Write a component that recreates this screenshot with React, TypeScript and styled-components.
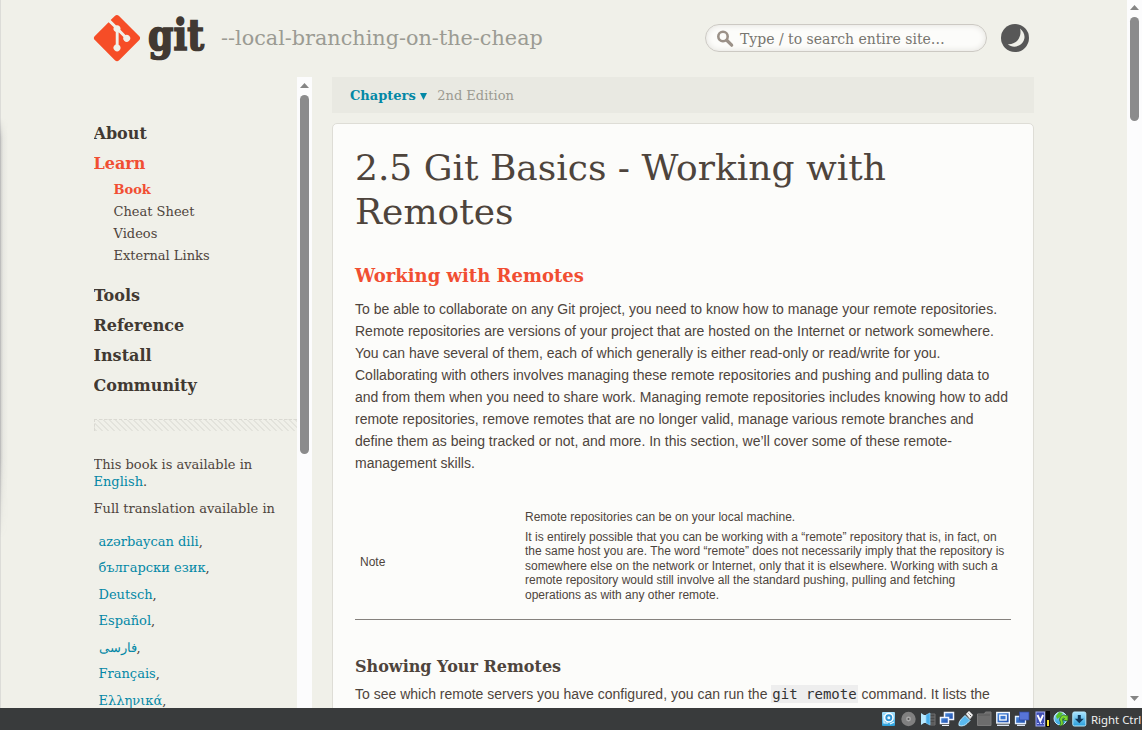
import React from "react";
import styled, { createGlobalStyle } from "styled-components";

const serif = '"DejaVu Serif", serif';
const sans = '"Liberation Sans", Arial, sans-serif';

const Global = createGlobalStyle`
  * { box-sizing: border-box; }
  body { margin: 0; overflow: hidden; background: #f0f0e9; color: #4e443c; font-family: ${serif}; }
  h1, h2, h3, p, ul { margin: 0; padding: 0; }
  a { color: #0388a6; text-decoration: none; }
`;

const Screen = styled.div`
  width: 1142px;
  height: 730px;
  display: flex;
  flex-direction: column;
  overflow: hidden;
`;
const Viewport = styled.div`
  height: 708px;
  display: flex;
  overflow: hidden;
`;
const Page = styled.div`
  position: relative;
  width: 1127px;
  height: 708px;
  padding: 0 93px 0 94px;
  background: #f0f0e9;
`;
const EdgeShadow = styled.div`
  position: absolute;
  left: 0;
  top: 0;
  width: 1px;
  height: 708px;
  background: #dcdcd8;
  &::after {
    content: "";
    position: absolute;
    left: 0;
    top: 118px;
    width: 8px;
    height: 420px;
    background: linear-gradient(90deg, rgba(90, 90, 100, 0.26), rgba(120, 120, 130, 0.07) 40%, transparent);
    mask-image: linear-gradient(transparent, #000 20px, #000 340px, transparent);
  }
`;

const Header = styled.header`
  height: 77px;
  display: flex;
  align-items: flex-start;
`;
const Logo = styled.svg`
  width: 112px;
  height: 52px;
  margin-top: 13px;
  flex: none;
  overflow: visible;
`;
const Tagline = styled.div`
  margin: 24px 0 0 15px;
  width: 484px;
  font-size: 20.75px;
  line-height: 28px;
  color: #9b9b93;
  white-space: nowrap;
`;
const Search = styled.div`
  width: 282px;
  height: 28px;
  margin-top: 24px;
  padding: 2px 0 0 10px;
  display: flex;
  align-items: center;
  border: 1px solid #ccc9c3;
  border-radius: 14px;
  background: #fcfcfa;
  box-shadow: inset 0 0 6px #e0dfda;
  font-size: 14px;
  color: #77756f;
  svg { width: 18px; height: 18px; margin-right: 6px; }
`;
const ThemeToggle = styled.svg`
  width: 28px;
  height: 28px;
  margin: 24px 0 0 14px;
`;

const Columns = styled.div`
  display: flex;
  height: 631px;
`;
const Sidebar = styled.aside`
  width: 203.5px;
  height: 631px;
  margin-left: -0.5px;
  padding-top: 42px;
  overflow: hidden;
`;
const NavItem = styled.div<{ $active?: boolean }>`
  height: 30px;
  line-height: 30px;
  font-size: 16px;
  font-weight: bold;
  color: ${(p) => (p.$active ? "#f14e32" : "#413932")};
`;
const SubNav = styled.div`
  padding: 0 0 14px 20px;
`;
const SubItem = styled.div<{ $active?: boolean }>`
  height: 22px;
  line-height: 22px;
  font-size: 13px;
  font-weight: ${(p) => (p.$active ? "bold" : "normal")};
  color: ${(p) => (p.$active ? "#f14e32" : "#4e443c")};
`;
const Hatch = styled.div`
  height: 12px;
  margin: 18px 0 25px 0;
  border-top: 1px dashed #dad9d2;
  border-left: 1px dashed #dad9d2;
  background: repeating-linear-gradient(45deg, #e3e3dc 0 2.1px, #f0f0e9 2.1px 4.243px);
`;
const SideText = styled.p`
  margin-bottom: 10px;
  font-size: 13px;
  line-height: 17px;
  white-space: nowrap;
`;
const Languages = styled.ul`
  list-style: none;
  padding: 1.8px 0 0 5px;
`;
const Language = styled.li`
  height: 26.5px;
  line-height: 26.5px;
  font-size: 13px;
`;

const Track = styled.div<{ $height: number }>`
  width: 15px;
  height: ${(p) => p.$height}px;
  flex: none;
  display: flex;
  flex-direction: column;
  align-items: center;
  background: #fcfcfd;
`;
const Thumb = styled.div<{ $height: number }>`
  width: 9px;
  height: ${(p) => p.$height}px;
  border-radius: 5px;
  background: #8b8b8c;
`;
const Arrow = styled.svg<{ $down?: boolean }>`
  width: 9px;
  height: 5px;
  margin: ${(p) => (p.$down ? "auto 0 7px" : "5px 0 7px")};
  transform: ${(p) => (p.$down ? "rotate(180deg)" : "none")};
`;
const SidebarTrack = styled(Track)`
  padding-top: 1px;
`;

const Main = styled.main`
  width: 702px;
  margin-left: 20px;
  flex: none;
`;
const BookBar = styled.div`
  height: 36px;
  padding-left: 18px;
  display: flex;
  align-items: center;
  gap: 10.5px;
  margin-bottom: 10px;
  background: #e9e9e2;
  font-size: 13px;
  color: #9b9a91;
`;
const Chapters = styled.a`
  display: flex;
  align-items: center;
  gap: 4px;
  font-weight: bold;
  svg { width: 7px; height: 7px; margin-top: 2px; }
`;
const Card = styled.article`
  height: 700px;
  padding: 22px 22px 0;
  background: #fcfcfa;
  border: 1px solid #deddd6;
  border-radius: 5px;
`;
const Title = styled.h1`
  font-size: 36px;
  font-weight: normal;
  line-height: 44px;
  color: #4e443c;
  margin-bottom: 29px;
  white-space: nowrap;
`;
const Heading = styled.h2`
  font-size: 18px;
  line-height: 26px;
  color: #f14e32;
  margin-bottom: 9px;
`;
const Body = styled.p`
  font-family: ${sans};
  font-size: 14px;
  line-height: 22px;
  white-space: nowrap;
`;
const Note = styled.div`
  display: grid;
  grid-template-columns: 165px 1fr;
  align-items: center;
  height: 115px;
  margin: 31px 0 36px;
  padding: 4px 0 15.2px 5px;
  font-family: ${sans};
  font-size: 12px;
  line-height: 14.5px;
  border-bottom: 1px solid #85817d;
  white-space: nowrap;
`;
const NoteLabel = styled.div`
  padding-top: 11.4px;
`;
const NoteLead = styled.p`
  margin-bottom: 5px;
`;
const SubHeading = styled.h3`
  font-size: 16px;
  line-height: 22px;
  margin-bottom: 5px;
`;
const Code = styled.code`
  padding: 1px 1px;
  font-family: "DejaVu Sans Mono", monospace;
  font-size: 14px;
  color: #333;
  background: #eee;
`;

const StatusBar = styled.footer`
  height: 22px;
  padding-left: 881px;
  display: flex;
  align-items: center;
  background: #393b3c;
  color: #f2f2f2;
  font: 11.4px "Noto Sans", sans-serif;
  white-space: nowrap;
  svg { width: 208px; height: 22px; flex: none; }
  span { margin-left: 2px; }
`;

const ScrollArrow = ({ down }: { down?: boolean }) => (
  <Arrow $down={down} viewBox="0 0 9 5"><path d="M0 5 4.5 0 9 5Z" fill="#858585" /></Arrow>
);

const languages = ["azərbaycan dili", "български език", "Deutsch", "Español", "فارسی", "Français", "Ελληνικά"];

const StatusIcons = () => (
  <svg viewBox="0 0 208 22">
    <defs>
      <linearGradient id="sky" x2="0" y2="1"><stop stopColor="#a9e3ff" /><stop offset="1" stopColor="#289fdb" /></linearGradient>
      <linearGradient id="royal" x2="1" y2="1"><stop stopColor="#4d90e0" /><stop offset="1" stopColor="#1c48a8" /></linearGradient>
    </defs>
    <rect x="1" y="4" width="13" height="14" rx="1" fill="url(#sky)" />
    <circle cx="7.8" cy="9.7" r="4.2" fill="#2e93d4" stroke="#fff" strokeWidth="1.5" />
    <circle cx="7.8" cy="9.7" r="1.5" fill="#e9f8ff" /><path d="M3 7v8h4M9 16l4-2" stroke="#e9f8ff" strokeWidth="1.2" fill="none" />
    <circle cx="27.5" cy="11" r="7.2" fill="#808080" /><circle cx="27.5" cy="11" r="2.4" fill="#aaa" /><circle cx="27.5" cy="11" r="1" fill="#555" />
    <path d="M49 6h5v11h-5M49 9h5M49 12h5M49 15h5" stroke="#707070" fill="#4a4a4a" />
    <path d="M40 5v12l3-2h2V7h-2Z" fill="#b8e9ff" /><path d="M45 7l4-2v12l-4-2Z" fill="#47aeea" stroke="#8fd3fa" strokeWidth=".7" />
    <rect x="63.5" y="4.5" width="9" height="7" fill="url(#royal)" stroke="#eef4ff" strokeWidth="1.5" />
    <rect x="59.5" y="9.5" width="8" height="6" fill="url(#royal)" stroke="#eef4ff" strokeWidth="1.5" /><path d="M61 17.5h7" stroke="#eef4ff" />
    <path d="M78 17.5c-.5-3 1-5 3-7l3-3 5 5-3 3c-2 2-5 3-8 2Z" fill="#5ab9ef" stroke="#c0eaff" /><path d="m85 6 3-3 4 4-3 4Z" fill="#f2f2f2" stroke="#aaa" strokeWidth=".6" /><path d="m87.5 5.5 1 1M89 7l1 1" stroke="#555" />
    <path d="M96.5 6h7l1-2h5.5v13.5H96.5Z" fill="#6d6d6d" stroke="#7b7b7b" /><path d="M97 7h12" stroke="#5b5b5b" />
    <rect x="115.8" y="4.5" width="12.5" height="10.5" fill="url(#royal)" stroke="#f4f9ff" strokeWidth="1.4" /><rect x="118.8" y="7.2" width="6.4" height="4.8" fill="#3d78d0" stroke="#fff" strokeWidth="1.3" /><path d="M116 17.3h12" stroke="#e4efff" strokeWidth="1.3" />
    <path d="M134.5 8.5h10v7h-10Z" fill="url(#royal)" stroke="#e4efff" strokeWidth="1.3" /><rect x="138.5" y="4" width="9.5" height="8" fill="#5774d8" stroke="#30479f" strokeWidth=".7" /><path d="M136 17.3h8" stroke="#e4efff" strokeWidth="1.3" />
    <rect x="155" y="4" width="8.5" height="14" fill="#3f4fb4" stroke="#9faaf1" /><path d="m156.500 7 2.8 6 2.8-6" fill="none" stroke="#fff" strokeWidth="1.8" /><path d="M156 15.5h7" stroke="#b8c2ff" strokeDasharray="2 1" />
    <path d="M165 3h4v16h-4Z" fill="#080808" /><path d="M166 12h2v6h-2Z" fill="#f4e338" />
    <circle cx="179.5" cy="10.5" r="6.5" fill="url(#sky)" stroke="#c1e9fa" /><path d="m175 8 3-4 4 1-3 4-3 2Z" fill="#56c32b" />
    <path d="M179 10c1-3 4-4 6-2l2-1v6l-5-1 1.5-1.500c-2-1-2.500 1-1.500 3 1 3-1 4.500-4 4.500 2-2 2-3 1-5-.6-1.200-.5-2 0-3Z" fill="#7bd82f" stroke="#235f1d" strokeWidth=".8" />
    <rect x="191.8" y="4" width="13" height="14" rx="1.5" fill="url(#sky)" stroke="#b6ebff" /><path d="M196.8 7h3v3.700h3l-4.500 4.500-4.500-4.500h3Z" fill="#10385b" />
  </svg>
);

export default function App() {
  return (
    <Screen>
      <Global />
      <Viewport>
        <Page>
          <EdgeShadow />
          <Header>
            <Logo viewBox="0 0 112 52">
              <path transform="translate(0 2) scale(.5)" fill="#f64d27" d="M90.156 41.965 50.036 1.848a5.918 5.918 0 0 0-8.372 0l-8.328 8.332 10.566 10.566a7.03 7.03 0 0 1 7.23 1.684 7.034 7.034 0 0 1 1.669 7.277l10.187 10.184a7.028 7.028 0 0 1 7.278 1.672 7.04 7.04 0 0 1 0 9.957 7.05 7.05 0 0 1-9.965 0 7.044 7.044 0 0 1-1.528-7.66l-9.5-9.497V59.36a7.04 7.04 0 0 1 1.86 11.29 7.04 7.04 0 0 1-9.957 0 7.04 7.04 0 0 1 0-9.958 7.06 7.06 0 0 1 2.304-1.539V33.926a7.049 7.049 0 0 1-3.82-9.234L29.242 14.272 1.73 41.777a5.918 5.918 0 0 0 0 8.372L41.852 90.27a5.925 5.925 0 0 0 8.37 0l39.934-39.934a5.925 5.925 0 0 0 0-8.371" />
              <text x="54" y="36.8" fontFamily="DejaVu Serif" fontWeight="bold" fontSize="42" fill="#413932" stroke="#413932" strokeWidth="1.7" textLength="56" lengthAdjust="spacingAndGlyphs">git</text>
            </Logo>
            <Tagline>--local-branching-on-the-cheap</Tagline>
            <Search>
              <svg viewBox="0 0 18 18" fill="none" stroke="#9b9188"><circle cx="7" cy="6.5" r="4.7" strokeWidth="2.6" /><path d="m11 10.500 4.700 4.700" strokeWidth="3.2" strokeLinecap="round" /></svg>
              Type / to search entire site…
            </Search>
            <ThemeToggle viewBox="0 0 28 28"><circle cx="14" cy="14" r="14" fill="#575757" /><path d="M19 4.500C24.500 9 25 15.500 20.500 19.800 16.500 23.500 10.500 23.500 6.800 20.300 11.500 20.500 15.500 18.500 17.700 14.800 19.500 11.500 20 8 19 4.500Z" fill="#f0f0e9" /></ThemeToggle>
          </Header>
          <Columns>
            <Sidebar>
              <NavItem>About</NavItem>
              <NavItem $active>Learn</NavItem>
              <SubNav>
                <SubItem $active>Book</SubItem>
                <SubItem>Cheat Sheet</SubItem>
                <SubItem>Videos</SubItem>
                <SubItem>External Links</SubItem>
              </SubNav>
              <NavItem>Tools</NavItem>
              <NavItem>Reference</NavItem>
              <NavItem>Install</NavItem>
              <NavItem>Community</NavItem>
              <Hatch />
              <SideText>This book is available in<br /><a>English</a>.</SideText>
              <SideText>Full translation available in</SideText>
              <Languages>
                {languages.map((l) => <Language key={l}><a>{l}</a>,</Language>)}
              </Languages>
            </Sidebar>
            <SidebarTrack $height={631}><ScrollArrow /><Thumb $height={359} /></SidebarTrack>
            <Main>
              <BookBar>
                <Chapters>Chapters <svg viewBox="0 0 7 7"><path d="M0 0h7L3.5 7Z" fill="#0388a6" /></svg></Chapters>
                <span>2nd Edition</span>
              </BookBar>
              <Card>
                <Title>2.5 Git Basics - Working with<br />Remotes</Title>
                <Heading>Working with Remotes</Heading>
                <Body>
                  To be able to collaborate on any Git project, you need to know how to manage your remote repositories.<br />
                  Remote repositories are versions of your project that are hosted on the Internet or network somewhere.<br />
                  You can have several of them, each of which generally is either read-only or read/write for you.<br />
                  Collaborating with others involves managing these remote repositories and pushing and pulling data to<br />
                  and from them when you need to share work. Managing remote repositories includes knowing how to add<br />
                  remote repositories, remove remotes that are no longer valid, manage various remote branches and<br />
                  define them as being tracked or not, and more. In this section, we’ll cover some of these remote-<br />
                  management skills.
                </Body>
                <Note>
                  <NoteLabel>Note</NoteLabel>
                  <div>
                    <NoteLead>Remote repositories can be on your local machine.</NoteLead>
                    <p>
                      It is entirely possible that you can be working with a “remote” repository that is, in fact, on<br />
                      the same host you are. The word “remote” does not necessarily imply that the repository is<br />
                      somewhere else on the network or Internet, only that it is elsewhere. Working with such a<br />
                      remote repository would still involve all the standard pushing, pulling and fetching<br />
                      operations as with any other remote.
                    </p>
                  </div>
                </Note>
                <SubHeading>Showing Your Remotes</SubHeading>
                <Body>To see which remote servers you have configured, you can run the <Code>git remote</Code> command. It lists the</Body>
              </Card>
            </Main>
          </Columns>
        </Page>
        <Track $height={708}><ScrollArrow /><Thumb $height={104} /><ScrollArrow down /></Track>
      </Viewport>
      <StatusBar><StatusIcons /><span>Right Ctrl</span></StatusBar>
    </Screen>
  );
}
